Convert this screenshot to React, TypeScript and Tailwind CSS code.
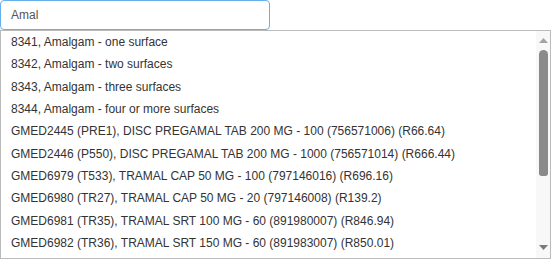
export default function App() {
  const items = [
    "8341, Amalgam - one surface",
    "8342, Amalgam - two surfaces",
    "8343, Amalgam - three surfaces",
    "8344, Amalgam - four or more surfaces",
    "GMED2445 (PRE1), DISC PREGAMAL TAB 200 MG - 100 (756571006) (R66.64)",
    "GMED2446 (P550), DISC PREGAMAL TAB 200 MG - 1000 (756571014) (R666.44)",
    "GMED6979 (T533), TRAMAL CAP 50 MG - 100 (797146016) (R696.16)",
    "GMED6980 (TR27), TRAMAL CAP 50 MG - 20 (797146008) (R139.2)",
    "GMED6981 (TR35), TRAMAL SRT 100 MG - 60 (891980007) (R846.94)",
    "GMED6982 (TR36), TRAMAL SRT 150 MG - 60 (891983007) (R850.01)",
  ];

  return (
    <div
      className="w-[551px] h-[259px] bg-white text-[12px]"
      style={{ fontFamily: '"Liberation Sans", Arial, sans-serif' }}
    >
      <div className="w-[270px] h-[30px] border border-[#66afe9] rounded-[4px] flex items-center px-[10px] text-[#555]">
        Amal
      </div>
      <div className="h-[229px] border border-[#bbbbbb] flex">
        <ul className="flex-1 overflow-hidden text-[#333]">
          {items.map((item) => (
            <li key={item} className="h-[22.33px] leading-[22.33px] pl-[10px] whitespace-nowrap">
              {item}
            </li>
          ))}
        </ul>
        <div className="w-[14px] bg-[#f8f8f8] flex flex-col items-center">
          <svg width="9" height="5" viewBox="0 0 9 5" className="mt-[7px]">
            <path d="M0 5 L4.5 0 L9 5 Z" fill="#a3a3a3" />
          </svg>
          <div className="w-[9px] h-[126px] mt-[7px] bg-[#8a8a8a] rounded-t-[5px] rounded-b-[3px]" />
          <div className="flex-1" />
          <svg width="9" height="5" viewBox="0 0 9 5" className="mb-[8px]">
            <path d="M0 0 L9 0 L4.5 5 Z" fill="#7a7a7a" />
          </svg>
        </div>
      </div>
    </div>
  );
}
